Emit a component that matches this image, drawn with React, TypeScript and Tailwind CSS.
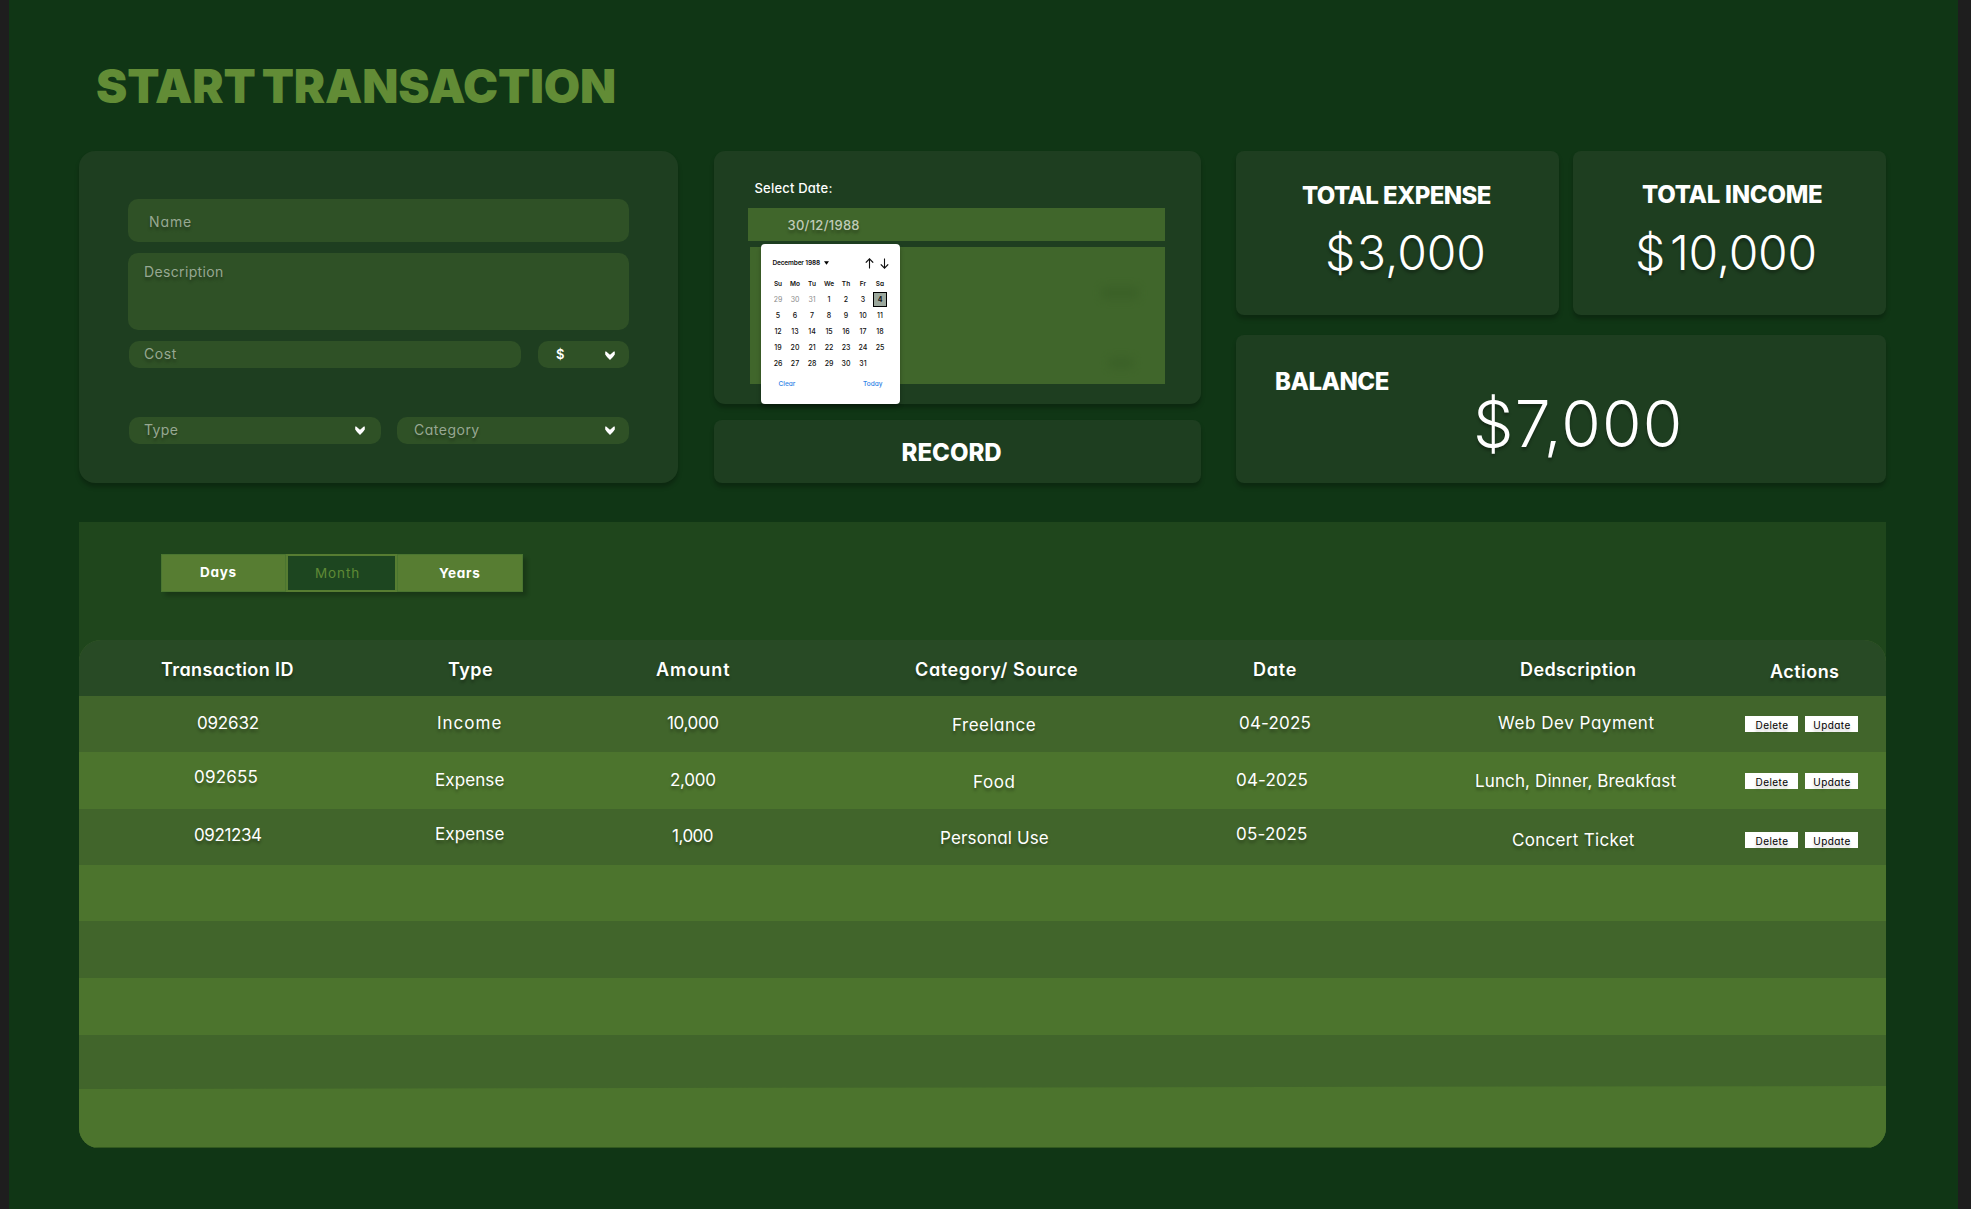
import type { ReactNode } from "react";

const shadow = "[text-shadow:0_3px_3px_rgba(0,0,0,0.3)]";
const card = "bg-[#1e3e20] shadow-[0_4px_4px_rgba(0,0,0,0.25)]";
const field = "flex rounded-[10px] bg-[#2f5126] text-[14px] leading-none text-[#97a892]";

function Chevron() {
  return (
    <svg width="10" height="9" viewBox="0 0 10 9" fill="#fff">
      <path d="M0.2 0.6 Q1.6 0.4 2.6 1.8 L5 3.8 L7.4 1.8 Q8.4 0.4 9.8 0.6 L9.8 3.6 Q8.8 5.6 5 8.9 Q1.2 5.6 0.2 3.6 Z" />
    </svg>
  );
}

function Arrow({ down }: { down?: boolean }) {
  return (
    <svg width="9" height="11" viewBox="0 0 9 11" fill="none" stroke="#111" className={down ? "rotate-180" : ""}>
      <path d="M4.5 10.5V1" strokeWidth="1.1" />
      <path d="M0.8 4.6L4.5 0.9L8.2 4.6" strokeWidth="1.3" />
    </svg>
  );
}

function TransactionForm() {
  return (
    <section className={`h-[332px] w-[599px] rounded-[16px] pt-12 pl-[49px] ${card}`}>
      <div className={`${field} h-[43px] w-[501px] pt-[16px] pl-[21px]`}>
        <span className={`tracking-[0.9px] ${shadow}`}>Name</span>
      </div>
      <div className={`${field} mt-[11px] h-[77px] w-[501px] pt-3 pl-[16px]`}>
        <span className={`tracking-[0.35px] ${shadow}`}>Description</span>
      </div>
      <div className="mt-[11px] flex w-[501px] justify-between pl-px">
        <div className={`${field} h-[27px] w-[392px] pt-[6px] pl-[15px]`}>
          <span className={`tracking-[0.6px] ${shadow}`}>Cost</span>
        </div>
        <div className={`${field} h-[27px] w-[91px] justify-between pt-[6px] pr-[14px] pl-[18px]`}>
          <span className="pt-px text-[13px] font-semibold text-white">$</span>
          <span className="pt-[4px]"><Chevron /></span>
        </div>
      </div>
      <div className="mt-[49px] flex w-[501px] justify-between pl-px">
        <div className={`${field} h-[27px] w-[252px] justify-between pt-[6px] pr-4 pl-[15px]`}>
          <span className={`tracking-[0.4px] ${shadow}`}>Type</span>
          <span className="pt-[3px]"><Chevron /></span>
        </div>
        <div className={`${field} h-[27px] w-[232px] justify-between pt-[6px] pr-[14px] pl-[17px]`}>
          <span className={`tracking-[0.5px] ${shadow}`}>Category</span>
          <span className="pt-[3px]"><Chevron /></span>
        </div>
      </div>
    </section>
  );
}

const weekdays = ["Su", "Mo", "Tu", "We", "Th", "Fr", "Sa"];
const days = [
  "29", "30", "31", "1", "2", "3", "4",
  "5", "6", "7", "8", "9", "10", "11",
  "12", "13", "14", "15", "16", "17", "18",
  "19", "20", "21", "22", "23", "24", "25",
  "26", "27", "28", "29", "30", "31",
];

function Calendar() {
  return (
    <div className="absolute top-[93px] left-[47px] h-[160px] w-[139px] rounded-[4px] bg-white pr-[8px] pl-[9px] pt-[13px] text-[7px] leading-none text-[#111] shadow-[0_3px_4px_rgba(0,0,0,0.3)]">
      <div className="flex h-[12px] items-center pl-[3px]">
        <span className="text-[6.5px] font-semibold tracking-[-0.15px] whitespace-nowrap">December 1988</span>
        <svg width="5" height="4" viewBox="0 0 5 4" className="ml-[4px]">
          <path d="M0 0.3H5L2.5 3.7Z" fill="#000" />
        </svg>
        <span className="ml-auto flex gap-[6px] pr-[3px]"><Arrow /><Arrow down /></span>
      </div>
      <div className="mt-[8px] grid grid-cols-[repeat(7,17px)] text-center text-[6.5px] font-semibold">
        {weekdays.map((d) => <span key={d} className="flex h-[14px] items-center justify-center">{d}</span>)}
      </div>
      <div className="grid grid-cols-[repeat(7,17px)] font-medium">
        {days.map((d, i) => (
          <span key={i} className={`flex h-4 items-center justify-center ${i < 3 ? "font-normal text-[#8b8b8b]" : ""}`}>
            {i === 6 ? (
              <span className="flex h-[15px] w-[14px] shrink-0 items-center justify-center border border-black bg-[#9ba79c] font-bold">4</span>
            ) : d}
          </span>
        ))}
      </div>
      <div className="mt-[10px] flex justify-between pr-[9px] pl-[9px] text-[6.5px] font-medium text-[#2f7fe6]">
        <span>Clear</span>
        <span>Today</span>
      </div>
    </div>
  );
}

function DateCard() {
  return (
    <section className={`relative h-[253px] w-[487px] rounded-[11px] pt-[31px] pl-[34px] ${card}`}>
      <h2 className="pl-[7px] text-[13px] leading-none font-medium tracking-[0.2px] text-white">Select Date:</h2>
      <div className="mt-[13px] h-[33px] w-[417px] bg-[#40662b] pt-[11px] pl-[40px] text-[13px] leading-none font-medium text-[#c0cbb8]">
        <span className={`tracking-[0.28px] ${shadow}`}>30/12/1988</span>
      </div>
      <div className="mt-[6px] ml-[2px] flex h-[137px] w-[415px] flex-col items-end justify-between bg-[#40662b] pt-[40px] pr-[27px] pb-[16px]">
        <div className="h-[12px] w-[36px] bg-[#375d25] opacity-60 blur-[4px]" />
        <div className="mr-[5px] h-[10px] w-[24px] bg-[#375d25] opacity-60 blur-[4px]" />
      </div>
      <Calendar />
    </section>
  );
}

function Summary() {
  const title = "leading-none font-extrabold text-[24px] whitespace-nowrap";
  return (
    <div className="flex w-[650px] flex-col gap-5 text-white">
      <div className="flex justify-between">
        <section className={`h-[164px] w-[323px] rounded-[8px] pt-[33px] pl-[66px] ${card}`}>
          <h2 className={`${title} tracking-[-0.6px]`}>TOTAL EXPENSE</h2>
          <p className={`mt-[21px] flex pl-[23px] text-[48px] leading-none font-[350] ${shadow}`}>
            <span className="w-[32px]">$</span>
            <span className="tracking-[-0.1px]">3,000</span>
          </p>
        </section>
        <section className={`h-[164px] w-[313px] rounded-[8px] pt-[32px] pl-[69px] ${card}`}>
          <h2 className={`${title} tracking-[-0.25px]`}>TOTAL INCOME</h2>
          <p className={`mt-[22px] -ml-[7px] flex text-[48px] leading-none font-[350] ${shadow}`}>
            <span className="w-[35px]">$</span>
            <span className="tracking-[-0.3px]">10,000</span>
          </p>
        </section>
      </div>
      <section className={`flex h-[148px] rounded-[8px] pl-[39px] ${card}`}>
        <h2 className={`${title} w-[198px] pt-[35px] tracking-[-0.5px]`}>BALANCE</h2>
        <p className={`pt-[57px] text-[64px] leading-none font-[350] tracking-[1.2px] ${shadow}`}>$7,000</p>
      </section>
    </div>
  );
}

function Tabs() {
  return (
    <div className="flex h-[38px] w-[362px] text-[13.5px] leading-none shadow-[4px_4px_4px_rgba(0,0,0,0.2)]">
      <button className="flex w-[125px] border border-[#4a7530] bg-[#577d32] pt-[11px] pl-[38px] font-bold tracking-[0.7px] text-white">Days</button>
      <button className="flex w-[111px] border-2 border-[#577d32] bg-[#1d4620] pt-[11px] pl-[27px] tracking-[0.9px] text-[#5f8a35]">Month</button>
      <button className="flex w-[126px] border border-[#4a7530] bg-[#577d32] pt-[12px] pl-[41px] font-bold tracking-[0.7px] text-white">Years</button>
    </div>
  );
}

const columns = "grid grid-cols-[271px_240px_260px_330px_240px_320px_146px]";

const headers: [string, string][] = [
  ["Transaction ID", "pl-[82px] tracking-[0.42px]"],
  ["Type", "pl-[98px] tracking-[0.5px]"],
  ["Amount", "pl-[66px] tracking-[1px]"],
  ["Category/ Source", "pl-[65px] tracking-[0.62px]"],
  ["Date", "pl-[73px] tracking-[0.8px]"],
  ["Dedscription", "pl-[100px] tracking-[0.4px]"],
  ["Actions", "pl-[30px] pt-[2px] tracking-[0.46px]"],
];

const rows: { shade: string; actions: string; cells: [string, string][] }[] = [
  {
    shade: "h-[56px] bg-[#41652b]",
    actions: "pt-[20px]",
    cells: [
      ["092632", "pl-[118px] pt-[19px] tracking-[-0.2px]"],
      ["Income", "pl-[87px] pt-[19px] tracking-[1px]"],
      ["10,000", "pl-[77px] pt-[19px] tracking-[-0.37px]"],
      ["Freelance", "pl-[102px] pt-[21px] tracking-[0.5px]"],
      ["04-2025", "pl-[59px] pt-[19px] tracking-[0.2px]"],
      ["Web Dev Payment", "pl-[78px] pt-[19px] tracking-[0.55px]"],
    ],
  },
  {
    shade: "h-[57px] bg-[#4c742d]",
    actions: "pt-[21px]",
    cells: [
      ["092655", "pl-[115px] pt-[17px] tracking-[0.2px]"],
      ["Expense", "pl-[85px] pt-[20px] tracking-[0.1px]"],
      ["2,000", "pl-[80px] pt-[20px] tracking-[-0.25px]"],
      ["Food", "pl-[123px] pt-[22px] tracking-[0.6px]"],
      ["04-2025", "pl-[56px] pt-[20px] tracking-[0.2px]"],
      ["Lunch, Dinner, Breakfast", "pl-[55px] pt-[21px] tracking-[0.12px]"],
    ],
  },
  {
    shade: "h-[56px] bg-[#41652b]",
    actions: "pt-[23px]",
    cells: [
      ["0921234", "pl-[115px] pt-[18px] tracking-[-0.4px]"],
      ["Expense", "pl-[85px] pt-[17px] tracking-[0.1px]"],
      ["1,000", "pl-[82px] pt-[19px] tracking-[-0.5px]"],
      ["Personal Use", "pl-[90px] pt-[21px] tracking-[0.15px]"],
      ["05-2025", "pl-[56px] pt-[17px] tracking-[0.2px]"],
      ["Concert Ticket", "pl-[92px] pt-[23px] tracking-[0.3px]"],
    ],
  },
];

function ActionButton({ children }: { children: ReactNode }) {
  return (
    <button className="flex h-4 w-[53px] items-center justify-center bg-white pt-px pl-px text-[10px] leading-none tracking-[0.45px] text-black [text-shadow:0_3px_3px_rgba(0,0,0,0.25)]">
      {children}
    </button>
  );
}

function TransactionTable() {
  return (
    <section className="mt-[39px] ml-[70px] w-[1807px] rounded-b-[20px] bg-[#1f461c]">
      <div className="h-[118px] pt-8 pl-[82px]"><Tabs /></div>
      <div className="overflow-hidden rounded-t-[22px] rounded-b-[20px] bg-[#41652b] text-white">
        <div className={`${columns} h-[56px] bg-[#284a25] pt-[21px] text-[18px] leading-none font-semibold ${shadow}`}>
          {headers.map(([label, place]) => <span key={label} className={`whitespace-nowrap ${place}`}>{label}</span>)}
        </div>
        {rows.map((row, r) => (
          <div key={r} className={`${columns} ${row.shade} text-[17px] leading-none`}>
            {row.cells.map(([text, place], c) => (
              <span key={c} className={`whitespace-nowrap ${place} ${shadow}`}>{text}</span>
            ))}
            <div className={`flex items-start gap-[7px] pl-[5px] ${row.actions}`}>
              <ActionButton>Delete</ActionButton>
              <ActionButton>Update</ActionButton>
            </div>
          </div>
        ))}
        <div className="h-[56px] bg-[#4c742d]" />
        <div className="h-[57px] bg-[#41652b]" />
        <div className="h-[57px] bg-[#4c742d]" />
        <div className="h-[51px] bg-[#41652b]" />
        <div className="h-[62px] border-b border-[#32591f] bg-[#4c742d] [clip-path:polygon(0_3px,100%_0,100%_100%,0_100%)]" />
      </div>
    </section>
  );
}

export default function App() {
  return (
    <div className="h-[1209px] w-[1971px] overflow-hidden border-r-[13px] border-l-[9px] border-[#1e1e1e] bg-[#103615] font-['Inter',sans-serif] [font-feature-settings:'cv11']">
      <h1 className="pt-[62px] pl-[87px] text-[47px] leading-none font-black tracking-[-0.15px] text-[#628c36] [word-spacing:-3px]">START TRANSACTION</h1>
      <div className="mt-[42px] ml-[70px] flex w-[1807px] justify-between">
        <TransactionForm />
        <div className="flex flex-col gap-4">
          <DateCard />
          <button className={`flex h-[63px] w-[487px] rounded-[8px] pt-[21px] pl-[188px] text-[24px] leading-none font-extrabold text-white ${card}`}>RECORD</button>
        </div>
        <Summary />
      </div>
      <TransactionTable />
    </div>
  );
}
